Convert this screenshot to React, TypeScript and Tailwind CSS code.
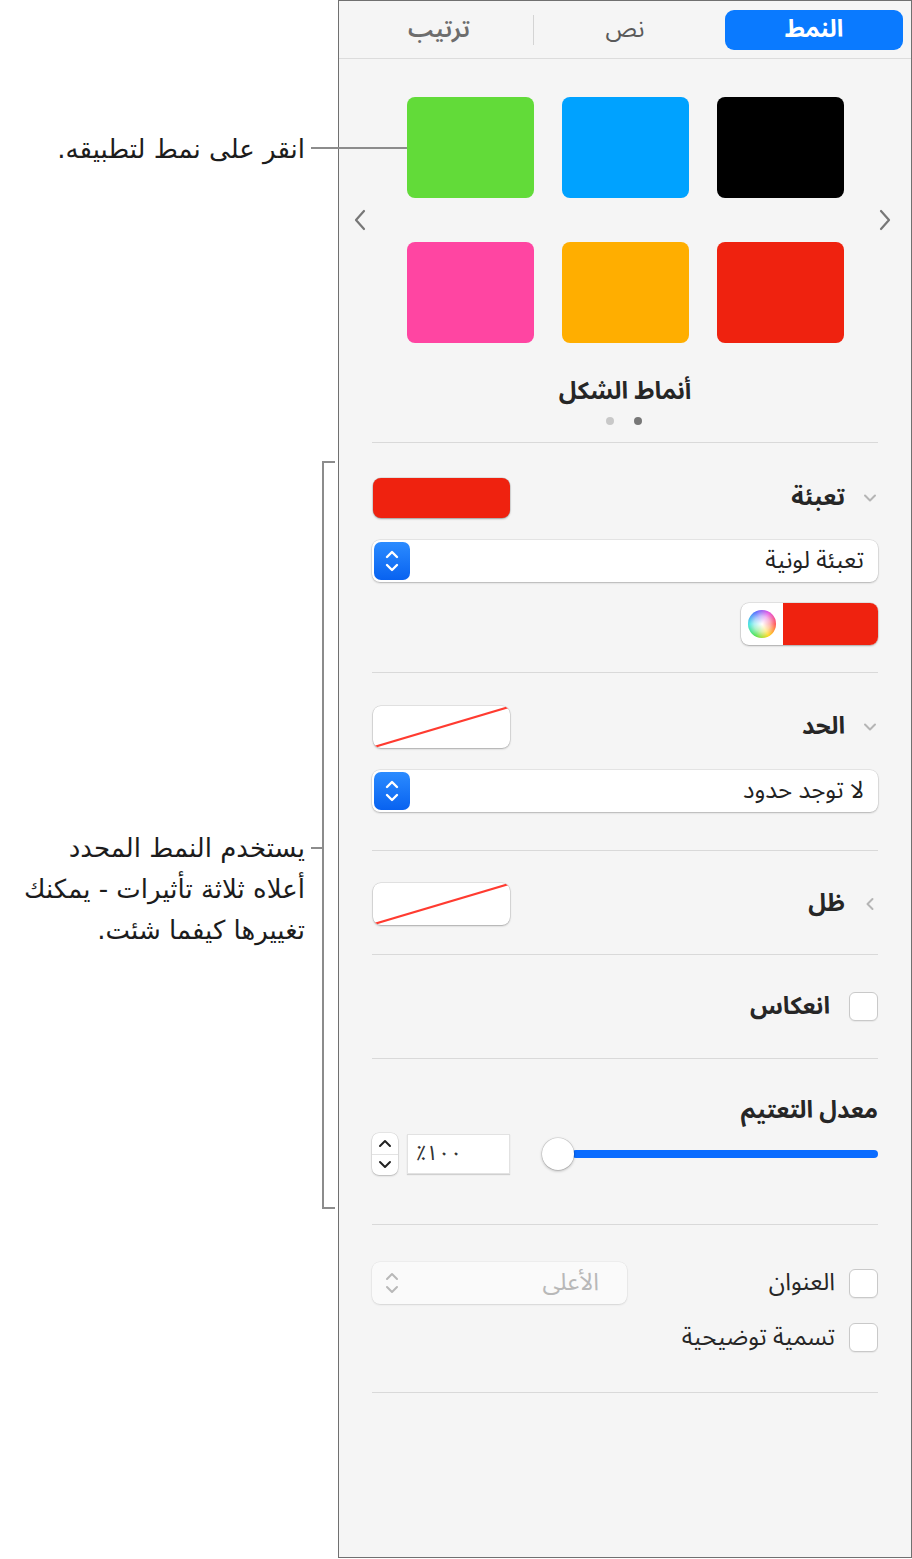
import React from 'react';

const panelFont = "font-['Noto_Sans_Arabic','DejaVu_Sans',sans-serif]";

function BlueStepper() {
  return (
    <div className="w-[36px] h-[38px] rounded-[7px] bg-linear-to-b from-[#2b8bff] to-[#0862f0] flex items-center justify-center">
      <svg width="16" height="28" viewBox="0 0 16 28" fill="none" stroke="white" strokeWidth="2.4" strokeLinecap="round" strokeLinejoin="round">
        <path d="M3 10 L8 5 L13 10" />
        <path d="M3 18 L8 23 L13 18" />
      </svg>
    </div>
  );
}

function Popup({ label }: { label: string }) {
  return (
    <div dir="rtl" className="h-[42px] bg-white rounded-[8px] shadow-[0_0_0_0.5px_rgba(0,0,0,0.12),0_1px_2px_rgba(0,0,0,0.22)] flex items-center justify-between pr-[14px] pl-[2px]">
      <span className="text-[24px] leading-[30px] text-[#222]">{label}</span>
      <BlueStepper />
    </div>
  );
}

function NoneSwatch() {
  return (
    <div className="w-[137px] h-[42px] rounded-[8px] bg-white overflow-hidden shadow-[0_0_0_0.5px_rgba(0,0,0,0.15),0_1px_2px_rgba(0,0,0,0.25)]">
      <svg width="137" height="42" viewBox="0 0 137 42">
        <line x1="1" y1="41" x2="136" y2="1" stroke="#ff3b30" strokeWidth="2.2" />
      </svg>
    </div>
  );
}

function Chevron({ dir }: { dir: 'down' | 'left' }) {
  return (
    <svg width="16" height="16" viewBox="0 0 16 16" fill="none" stroke="#b5b5b5" strokeWidth="2" strokeLinecap="round" strokeLinejoin="round">
      {dir === 'down' ? <path d="M3 5.5 L8 10.5 L13 5.5" /> : <path d="M10.5 3 L5.5 8 L10.5 13" />}
    </svg>
  );
}

function Checkbox() {
  return <div className="w-[29px] h-[29px] shrink-0 rounded-[6px] bg-white border border-[#c9c9c9] shadow-[0_1px_1px_rgba(0,0,0,0.06)]" />;
}

function Sep() {
  return <div className="h-px bg-[#d9d9d9]" />;
}

export default function App() {
  const swatches = ['bg-[#62db39]', 'bg-[#00a2ff]', 'bg-black', 'bg-[#ff45a2]', 'bg-[#ffae00]', 'bg-[#ef220f]'];

  return (
    <div className="relative w-[912px] h-[1559px] flex bg-white overflow-hidden">
      {/* Callouts */}
      <div className="w-[338px] flex flex-col items-end pr-[33px] pt-[132px] font-['DejaVu_Sans',sans-serif] text-[#1c1c1c]">
        <p dir="rtl" className="text-[26px] leading-[34px] whitespace-nowrap">انقر على نمط لتطبيقه.</p>
        <p dir="rtl" className="mt-[662px] text-[26px] leading-[41px] text-right whitespace-nowrap">
          يستخدم النمط المحدد
          <br />
          أعلاه ثلاثة تأثيرات - يمكنك
          <br />
          تغييرها كيفما شئت.
        </p>
      </div>
      <div className="absolute left-[311px] top-[147px] w-[96px] h-[2px] bg-[#8c8c8c] z-10" />
      <div className="absolute left-[322px] top-[461px] w-[13px] h-[748px] border-2 border-r-0 border-[#8c8c8c]" />
      <div className="absolute left-[311px] top-[847px] w-[12px] h-[2px] bg-[#8c8c8c]" />

      {/* Inspector panel */}
      <div className={`w-[574px] h-[1558px] border border-[#707070] bg-[#f5f5f5] ${panelFont}`}>
        {/* Tabs */}
        <div className="h-[58px] border-b border-[#dcdcdc] flex items-center pl-[6px]">
          <div className="w-[188px] text-center text-[24px] leading-[32px] font-semibold text-[#6d6d6d]">ترتيب</div>
          <div className="w-px h-[30px] bg-[#d4d4d4]" />
          <div className="w-[182px] text-center text-[24px] leading-[32px] text-[#5a5a5a]">نص</div>
          <div className="ml-[9px] w-[178px] h-[40px] rounded-[9px] bg-[#0a7aff] flex items-center justify-center text-[24px] leading-[32px] font-bold text-white">
            النمط
          </div>
        </div>

        {/* Style presets */}
        <div className="flex items-center pl-[14px] mt-[38px]">
          <svg width="14" height="22" viewBox="0 0 14 22" fill="none" stroke="#777" strokeWidth="2.2" strokeLinecap="round" strokeLinejoin="round">
            <path d="M11 2 L3 11 L11 20" />
          </svg>
          <div className="ml-[40px] grid grid-cols-[127px_127px_127px] gap-x-[28px] gap-y-[44px]">
            {swatches.map((c) => (
              <div key={c} className={`${c} h-[101px] rounded-[8px]`} />
            ))}
          </div>
          <svg className="ml-[34px]" width="14" height="22" viewBox="0 0 14 22" fill="none" stroke="#777" strokeWidth="2.2" strokeLinecap="round" strokeLinejoin="round">
            <path d="M3 2 L11 11 L3 20" />
          </svg>
        </div>

        <div className="mt-[33px] text-center text-[24px] leading-[32px] font-bold text-[#262626]">أنماط الشكل</div>
        <div className="mt-[9px] flex justify-center gap-[20px] pr-[2px]">
          <div className="w-[8px] h-[8px] rounded-full bg-[#c8c8c8]" />
          <div className="w-[8px] h-[8px] rounded-full bg-[#777]" />
        </div>

        <div className="px-[33px]">
          <div className="mt-[17px]"><Sep /></div>

          {/* Fill */}
          <div dir="rtl" className="mt-[35px] h-[40px] flex items-center">
            <Chevron dir="down" />
            <span className="mr-[17px] text-[24px] leading-[32px] font-bold text-[#262626]">تعبئة</span>
            <div className="mr-auto ml-[1px] w-[137px] h-[40px] rounded-[8px] bg-[#ef220f] shadow-[0_0_0_0.5px_rgba(0,0,0,0.15),0_1px_2px_rgba(0,0,0,0.3)]" />
          </div>
          <div className="mt-[22px]"><Popup label="تعبئة لونية" /></div>
          <div className="mt-[21px] flex justify-end">
            <div className="w-[137px] h-[42px] rounded-[8px] bg-white overflow-hidden flex shadow-[0_0_0_0.5px_rgba(0,0,0,0.15),0_1px_2px_rgba(0,0,0,0.25)]">
              <div className="w-[42px] flex items-center justify-center">
                <div className="relative w-[28px] h-[28px] rounded-full bg-[conic-gradient(from_90deg,#ff4040,#ffd400,#40e040,#30e0e0,#4060ff,#e040e0,#ff4040)]">
                  <div className="absolute inset-0 rounded-full bg-[radial-gradient(circle,white_0%,rgba(255,255,255,0.6)_40%,rgba(255,255,255,0)_75%)]" />
                </div>
              </div>
              <div className="flex-1 bg-[#ef220f]" />
            </div>
          </div>
          <div className="mt-[27px]"><Sep /></div>

          {/* Border */}
          <div dir="rtl" className="mt-[33px] h-[42px] flex items-center">
            <Chevron dir="down" />
            <span className="mr-[17px] text-[24px] leading-[32px] font-bold text-[#262626]">الحد</span>
            <div className="mr-auto ml-[1px]"><NoneSwatch /></div>
          </div>
          <div className="mt-[22px]"><Popup label="لا توجد حدود" /></div>
          <div className="mt-[38px]"><Sep /></div>

          {/* Shadow */}
          <div dir="rtl" className="mt-[32px] h-[42px] flex items-center">
            <Chevron dir="left" />
            <span className="mr-[17px] text-[24px] leading-[32px] font-bold text-[#262626]">ظل</span>
            <div className="mr-auto ml-[1px]"><NoneSwatch /></div>
          </div>
          <div className="mt-[29px]"><Sep /></div>

          {/* Reflection */}
          <div dir="rtl" className="mt-[37px] h-[29px] flex items-center">
            <Checkbox />
            <span className="mr-[19px] text-[24px] leading-[32px] font-bold text-[#262626]">انعكاس</span>
          </div>
          <div className="mt-[37px]"><Sep /></div>

          {/* Opacity */}
          <div dir="rtl" className="mt-[36px] text-[24px] leading-[32px] font-bold text-[#262626]">معدل التعتيم</div>
          <div className="mt-[6px] h-[42px] flex items-center">
            <div className="w-[26px] h-[42px] rounded-[7px] bg-white flex flex-col shadow-[0_0_0_0.5px_rgba(0,0,0,0.12),0_1px_2px_rgba(0,0,0,0.2)]">
              <div className="flex-1 flex items-center justify-center border-b border-[#e3e3e3]">
                <svg width="14" height="9" viewBox="0 0 14 9" fill="none" stroke="#222" strokeWidth="2" strokeLinecap="round" strokeLinejoin="round"><path d="M2 7 L7 2 L12 7" /></svg>
              </div>
              <div className="flex-1 flex items-center justify-center">
                <svg width="14" height="9" viewBox="0 0 14 9" fill="none" stroke="#222" strokeWidth="2" strokeLinecap="round" strokeLinejoin="round"><path d="M2 2 L7 7 L12 2" /></svg>
              </div>
            </div>
            <div dir="ltr" className="ml-[9px] w-[103px] h-[40px] bg-white border border-[#e2e2e2] shadow-[0_1px_1px_rgba(0,0,0,0.15)] flex items-center pl-[8px] text-[21px] text-[#333]">
              ٪١٠٠
            </div>
            <div className="ml-[32px] flex-1 flex items-center">
              <div className="relative z-10 w-[32px] h-[32px] rounded-full bg-white shadow-[0_0_0_0.5px_rgba(0,0,0,0.15),0_1px_3px_rgba(0,0,0,0.3)]" />
              <div className="-ml-[2px] flex-1 h-[8px] rounded-full bg-[#0a6cff]" />
            </div>
          </div>
          <div className="mt-[49px]"><Sep /></div>

          {/* Title & caption */}
          <div dir="rtl" className="mt-[37px] h-[42px] flex items-center">
            <Checkbox />
            <span className="mr-[14px] text-[24px] leading-[32px] text-[#262626]">العنوان</span>
            <div className="mr-auto w-[255px] h-[42px] rounded-[8px] bg-[#fafafa] shadow-[0_0_0_0.5px_rgba(0,0,0,0.06),0_1px_2px_rgba(0,0,0,0.1)] flex items-center justify-between pr-[28px] pl-[12px]">
              <span className="text-[24px] leading-[30px] text-[#b8b8b8]">الأعلى</span>
              <svg width="16" height="28" viewBox="0 0 16 28" fill="none" stroke="#b8b8b8" strokeWidth="2" strokeLinecap="round" strokeLinejoin="round">
                <path d="M3 10 L8 5 L13 10" />
                <path d="M3 18 L8 23 L13 18" />
              </svg>
            </div>
          </div>
          <div dir="rtl" className="mt-[19px] h-[29px] flex items-center">
            <Checkbox />
            <span className="mr-[14px] text-[24px] leading-[32px] text-[#262626]">تسمية توضيحية</span>
          </div>
          <div className="mt-[40px]"><Sep /></div>
        </div>
      </div>
    </div>
  );
}
